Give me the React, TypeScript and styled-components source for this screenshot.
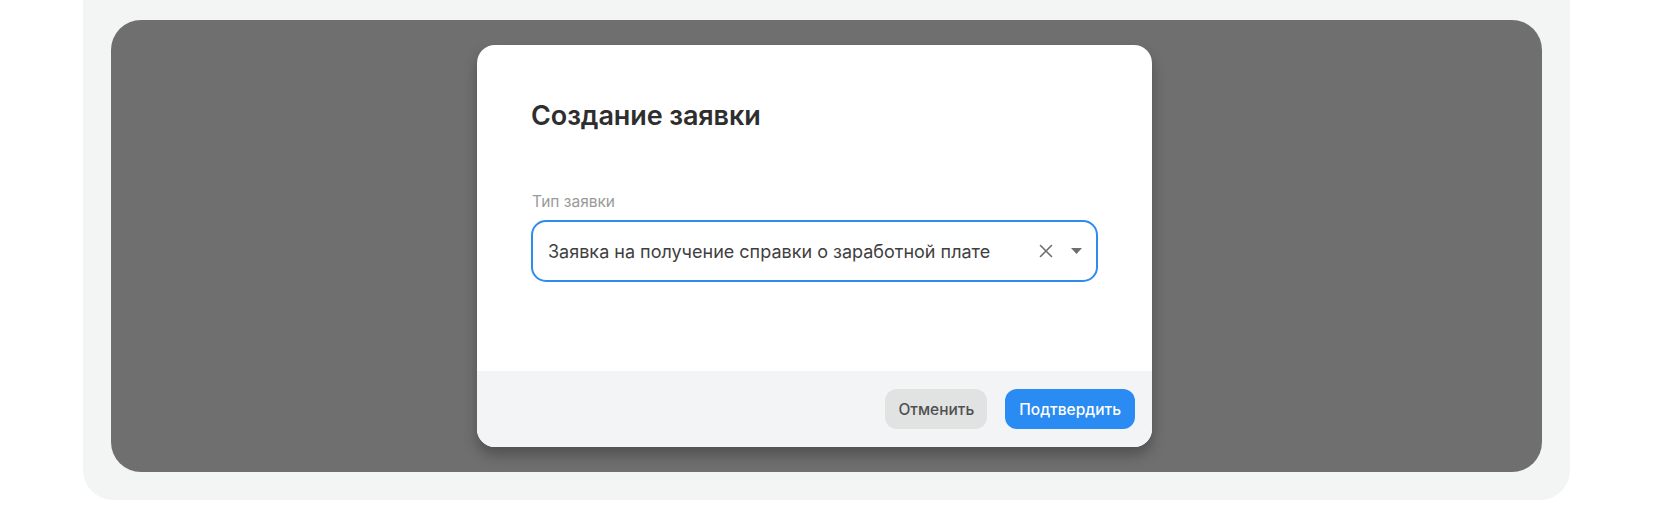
import { FC, SVGProps } from 'react';
import styled, { createGlobalStyle } from 'styled-components';

const GlobalStyle = createGlobalStyle`
  html, body {
    margin: 0;
    padding: 0;
    background: #ffffff;
  }
  body {
    font-family: Inter, 'Liberation Sans', Arial, sans-serif;
    -webkit-font-smoothing: antialiased;
  }
  * {
    box-sizing: border-box;
  }
`;

const Page = styled.div`
  width: 1653px;
  height: 512px;
  padding-left: 83px;
  overflow: hidden;
`;

const Frame = styled.div`
  width: 1487px;
  background: #f3f5f5;
  border-radius: 0 0 30px 30px;
  padding: 20px 28px 28px;
`;

const Overlay = styled.div`
  height: 452px;
  background: #6f6f6f;
  border-radius: 30px;
  padding: 25px 0 0 366px;
`;

const Modal = styled.div`
  width: 675px;
  height: 402px;
  background: #ffffff;
  border-radius: 18px;
  overflow: hidden;
  display: flex;
  flex-direction: column;
  box-shadow: 0 8px 14px rgba(0, 0, 0, 0.28);
`;

const ModalBody = styled.div`
  flex: 1;
  padding: 55px 54px 0 54px;
  display: flex;
  flex-direction: column;
`;

const Title = styled.h2`
  margin: 0;
  font-size: 27px;
  line-height: 32px;
  font-weight: 600;
  color: #2e2e2e;
  letter-spacing: -0.1px;
`;

const Field = styled.div`
  margin-top: 60px;
  display: flex;
  flex-direction: column;
  gap: 9px;
`;

const Label = styled.label`
  font-size: 15.5px;
  line-height: 19px;
  color: #9a9a9a;
  padding-left: 1px;
`;

const SelectBox = styled.div`
  height: 62px;
  border: 2px solid #2f8cef;
  border-radius: 15px;
  display: flex;
  align-items: center;
  padding: 0 8px 0 15px;
  gap: 8px;
`;

const SelectValue = styled.span`
  flex: 1;
  font-size: 18px;
  color: #3f3f3f;
  white-space: nowrap;
`;

const IconButton = styled.span<{ $w: number }>`
  width: ${p => p.$w}px;
  height: 20px;
  display: flex;
  align-items: center;
  justify-content: center;
  color: #6e6e6e;
`;

const Footer = styled.div`
  height: 76px;
  background: #f3f4f6;
  display: flex;
  justify-content: flex-end;
  align-items: flex-start;
  gap: 18px;
  padding: 18px 17px 0 0;
`;

const Button = styled.button<{ $primary?: boolean }>`
  height: 40px;
  border: none;
  border-radius: 12px;
  padding: 0 ${p => (p.$primary ? 14 : 13)}px;
  font-family: inherit;
  font-size: 15.5px;
  font-weight: 500;
  cursor: pointer;
  background: ${p => (p.$primary ? '#2a8bf2' : '#e1e2e2')};
  color: ${p => (p.$primary ? '#ffffff' : '#505050')};
`;

const ClearIcon: FC<SVGProps<SVGSVGElement>> = props => (
  <svg viewBox='0 0 14 14' width='14' height='14' {...props}>
    <path
      d='M1.5 1.5L12.5 12.5M12.5 1.5L1.5 12.5'
      stroke='currentColor'
      strokeWidth='1.6'
      strokeLinecap='round'
      fill='none'
    />
  </svg>
);

const CaretIcon: FC<SVGProps<SVGSVGElement>> = props => (
  <svg viewBox='0 0 11 6' width='11' height='6' {...props}>
    <path d='M0 0H11L5.5 6Z' fill='currentColor' />
  </svg>
);

export default function App() {
  return (
    <>
      <GlobalStyle />
      <Page>
        <Frame>
          <Overlay>
            <Modal>
              <ModalBody>
                <Title>Создание заявки</Title>
                <Field>
                  <Label>Тип заявки</Label>
                  <SelectBox>
                    <SelectValue>
                      Заявка на получение справки о заработной плате
                    </SelectValue>
                    <IconButton $w={20}>
                      <ClearIcon />
                    </IconButton>
                    <IconButton $w={24}>
                      <CaretIcon />
                    </IconButton>
                  </SelectBox>
                </Field>
              </ModalBody>
              <Footer>
                <Button>Отменить</Button>
                <Button $primary>Подтвердить</Button>
              </Footer>
            </Modal>
          </Overlay>
        </Frame>
      </Page>
    </>
  );
}
